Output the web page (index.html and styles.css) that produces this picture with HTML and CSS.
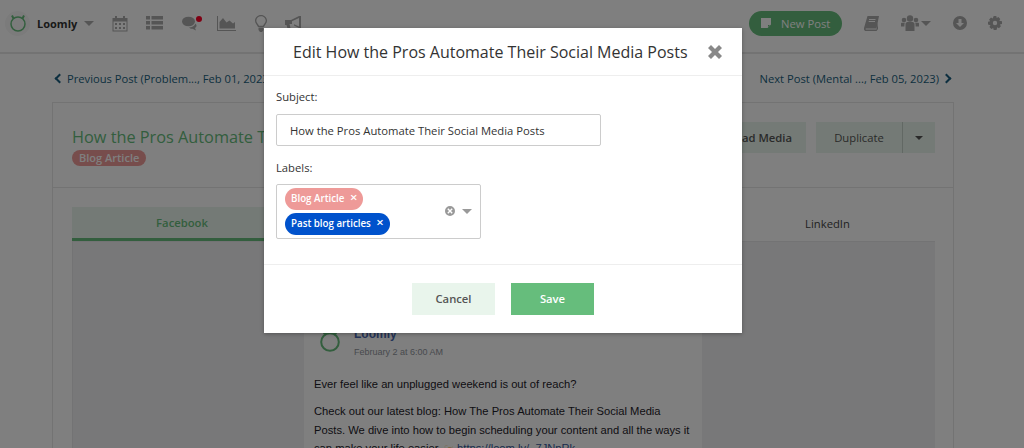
FILE: index.html
```html
<!DOCTYPE html>
<html lang="en">
<head>
    <meta charset="UTF-8">
    <title>Edit post</title>
    <link rel="stylesheet" href="styles.css">
</head>
<body>
    <div class="nav">
        <div class="nav-group">
            <div class="logo">
                <svg width="20" height="20" viewBox="0 0 20 20" fill="none">
                    <circle cx="10" cy="11" r="7" stroke="#66bd7c" stroke-width="1.500"/>
                    <path d="M4 2.500L5.500 5.500M16 2.500L14.500 5.500" stroke="#66bd7c" stroke-width="2"/>
                </svg>
            </div>
            <span class="brand">Loomly</span>
            <span class="caret caret-brand"></span>
            <svg class="icon icon-calendar" width="16" height="17" viewBox="0 0 16 17">
                <path fill-rule="evenodd" d="M.5 3H3V1H5V3H11V1H13V3H15.500V16.500H.5V3ZM1.500 6.500V15.500H14.500V6.500ZM3 8H5V10H3ZM7 8H9V10H7ZM11 8H13V10H11ZM3 12H5V14H3ZM7 12H9V14H7ZM11 12H13V14H11Z"/>
            </svg>
            <svg class="icon icon-list" width="17" height="14" viewBox="0 0 17 14">
                <path d="M0 0H4V3.500H0ZM5.500 0H17V3.500H5.500ZM0 5H4V8.500H0ZM5.500 5H17V8.500H5.500ZM0 10H4V13.500H0ZM5.500 10H17V13.500H5.500Z"/>
            </svg>
            <span class="chat">
                <svg class="icon" width="15" height="15" viewBox="0 0 15 15">
                    <ellipse cx="6.500" cy="5.500" rx="6.500" ry="4.800"/>
                    <path d="M7 11.500C10 11.500 12.500 10 13.500 7.500C15 9 15 11 13 12L14 14.500L10.500 12.800C9 13 8 12.500 7 11.500Z"/>
                </svg>
                <span class="dot"></span>
            </span>
            <svg class="icon icon-chart" width="19" height="15" viewBox="0 0 19 15">
                <path d="M0 0H1V14H19V15H0ZM2.500 12.500V6L6 2L9.500 6.500L12.500 4.500L16 7.500L18 6V12.500Z"/>
            </svg>
            <svg class="icon icon-bulb" width="12" height="17" viewBox="0 0 12 17">
                <path fill-rule="evenodd" d="M6 0C9.300 0 12 2.500 12 5.700C12 8.500 9.800 9.500 9 12H3C2.200 9.500 0 8.500 0 5.700C0 2.500 2.700 0 6 0ZM6 1.300C3.400 1.300 1.300 3.200 1.300 5.700C1.300 7.600 3.200 8.700 4 10.800H8C8.800 8.700 10.700 7.600 10.700 5.700C10.700 3.200 8.600 1.300 6 1.300ZM3.500 12.500H8.500V15L7 17H5L3.500 15Z"/>
            </svg>
            <svg class="icon icon-horn" width="16" height="15" viewBox="0 0 16 15">
                <path fill-rule="evenodd" d="M0 4H6L14 0H16V12H14L9 9.500V8.300L14 10.500V2L7 5.300V8H4.500L6 14H3L1.500 9H0Z"/>
            </svg>
        </div>
        <div class="nav-group">
            <button class="new-post">
                <svg width="10" height="10" viewBox="0 0 10 10"><path d="M0 0H10V6.500L6.500 10H0ZM7 7V9L9 7Z" fill="#fff"/></svg>
                New Post
            </button>
            <svg class="icon icon-book" width="15" height="15" viewBox="0 0 15 15">
                <path fill-rule="evenodd" d="M3.500 0H15L12.500 12.500H2C1.500 12.500 1.300 13.500 2 13.500H12.500L14 7V13L12.500 15H2C.5 15-.3 13.500 0 12ZM5 3V4H11.500V3ZM4.700 5V6H11V5Z"/>
            </svg>
            <svg class="icon icon-group" width="18" height="16" viewBox="0 0 18 16">
                <circle cx="9" cy="3.500" r="3.200"/><circle cx="3" cy="5" r="2.300"/><circle cx="15" cy="5" r="2.300"/>
                <path d="M4.500 9C4.500 7.500 6 7 7 7H11C12 7 13.500 7.500 13.500 9V16H4.500ZM0 8.500C0 8 .5 7.800 1 7.800H4C3.500 8.300 3.400 9 3.400 11.500H0ZM18 8.500C18 8 17.500 7.800 17 7.800H14C14.500 8.300 14.600 9 14.600 11.500H18Z"/>
            </svg>
            <span class="caret caret-group"></span>
            <svg class="icon icon-download" width="14" height="14" viewBox="0 0 14 14">
                <path fill-rule="evenodd" d="M7 0A7 7 0 1 1 7 14A7 7 0 1 1 7 0ZM5.500 3V7H3L7 11L11 7H8.500V3Z"/>
            </svg>
            <svg class="icon icon-gear" width="14" height="14" viewBox="0 0 14 14">
                <path fill-rule="evenodd" d="M5.700 0H8.300L8.700 2L10.400 1.100L12.300 3L11.300 4.700L14 5.300V8L11.900 8.500L12.900 10.300L11 12.200L9.300 11.200L8.500 14H5.700L5.200 11.900L3.400 12.900L1.400 11L2.500 9.300L0 8.600V5.800L2.100 5.300L1.100 3.500L3 1.600L4.700 2.600ZM7 4.800A2.200 2.200 0 1 0 7 9.200A2.200 2.200 0 1 0 7 4.800Z"/>
            </svg>
        </div>
    </div>

    <div class="pager">
        <a class="pager-link"><span class="chevron chevron-left"></span>Previous Post (Problem..., Feb 01, 2023)</a>
        <a class="pager-link">Next Post (Mental ..., Feb 05, 2023)<span class="chevron chevron-right"></span></a>
    </div>

    <div class="card">
        <div class="card-head">
            <div>
                <h2 class="post-title">How the Pros Automate Their Social Media Posts</h2>
                <span class="label-small">Blog Article</span>
            </div>
            <div class="card-actions">
                <button class="btn-soft btn-upload">Upload Media</button>
                <div class="split">
                    <button class="btn-soft btn-duplicate">Duplicate</button>
                    <button class="btn-soft btn-more"><span class="caret caret-small"></span></button>
                </div>
            </div>
        </div>
        <div class="card-body">
            <div class="tabs">
                <div class="tab tab-active">Facebook</div>
                <div class="tab-spacer"></div>
                <div class="tab">LinkedIn</div>
            </div>
            <div class="preview">
                <div class="post">
                    <div class="post-head">
                        <svg class="post-avatar" width="20" height="24" viewBox="0 0 20 24" fill="none">
                            <circle cx="10" cy="14" r="8.800" stroke="#66bd7c" stroke-width="2"/>
                            <path d="M3 2.500C3.500 5 4.500 6 6 6.500M17 2.500C16.500 5 15.500 6 14 6.500" stroke="#66bd7c" stroke-width="2"/>
                        </svg>
                        <div class="post-meta">
                            <div class="post-name">Loomly</div>
                            <div class="post-date">February 2 at 6:00 AM</div>
                        </div>
                    </div>
                    <p>Ever feel like an unplugged weekend is out of reach?</p>
                    <p>Check out our latest blog: How The Pros Automate Their Social Media Posts. We dive into how to begin scheduling your content and all the ways it can make your life easier. <span class="emoji">☞</span> <span class="post-link">https://loom.ly/_7JNpRk</span></p>
                </div>
            </div>
        </div>
    </div>

    <div class="overlay"></div>

    <div class="modal">
        <div class="modal-header">
            <h3>Edit How the Pros Automate Their Social Media Posts</h3>
            <svg class="modal-close" width="14" height="14" viewBox="0 0 14 14">
                <path d="M3 0L7 4L11 0L14 3L10 7L14 11L11 14L7 10L3 14L0 11L4 7L0 3Z"/>
            </svg>
        </div>
        <div class="modal-body">
            <label>Subject:</label>
            <input class="subject" type="text" value="How the Pros Automate Their Social Media Posts">
            <label class="label-second">Labels:</label>
            <div class="select">
                <div class="chips">
                    <span class="chip chip-pink">Blog Article <b>×</b></span>
                    <span class="chip chip-blue">Past blog articles <b>×</b></span>
                </div>
                <svg class="clear" width="10" height="10" viewBox="0 0 10 10">
                    <path fill-rule="evenodd" d="M5 0A5 5 0 1 1 5 10A5 5 0 1 1 5 0ZM3.300 2.300L2.300 3.300L4 5L2.300 6.700L3.300 7.700L5 6L6.700 7.700L7.700 6.700L6 5L7.700 3.300L6.700 2.300L5 4Z"/>
                </svg>
                <span class="caret caret-select"></span>
            </div>
        </div>
        <div class="modal-footer">
            <button class="btn-cancel">Cancel</button>
            <button class="btn-save">Save</button>
        </div>
    </div>
</body>
</html>
```

FILE: styles.css
```css
* {
    box-sizing: border-box;
}
html, body {
    height: 448px;
    overflow: hidden;
}
body {
    margin: 0;
    background-color: white;
    font-family: 'Open Sans', sans-serif;
    font-size: 13px;
    color: #333;
}
button {
    font-family: inherit;
    border: none;
}
svg {
    display: block;
    flex: none;
}
.icon {
    fill: #aaa;
}

/* top nav */
.nav {
    height: 54px;
    border-bottom: 2px solid #e6e6e6;
    display: flex;
    justify-content: space-between;
    align-items: center;
    padding: 0 22px 6px 5px;
}
.nav-group {
    display: flex;
    align-items: center;
}
.logo {
    width: 25px;
    height: 25px;
    border-radius: 50%;
    background-color: #f6f6f6;
    display: flex;
    justify-content: center;
    align-items: center;
}
.brand {
    margin-left: 7px;
    font-size: 11px;
    font-weight: 700;
    color: #333;
}
.caret {
    display: block;
    width: 0;
    height: 0;
    border-left: 5px solid transparent;
    border-right: 5px solid transparent;
    border-top: 5px solid #aaa;
}
.caret-brand {
    margin-left: 7px;
}
.icon-calendar {
    margin-left: 18px;
}
.icon-list {
    margin-left: 18px;
}
.chat {
    margin-left: 19px;
    width: 20px;
    display: flex;
    position: relative;
}
.dot {
    position: absolute;
    top: 0;
    left: 14px;
    width: 6px;
    height: 6px;
    border-radius: 50%;
    background-color: #ff0026;
}
.icon-chart {
    margin-left: 15px;
}
.icon-bulb {
    margin-left: 19px;
}
.icon-horn {
    margin-left: 18px;
}
.new-post {
    width: 93px;
    height: 25px;
    border-radius: 13px;
    background-color: #66bd7c;
    color: white;
    font-size: 11.250px;
    display: flex;
    align-items: center;
    gap: 10px;
    padding: 0 0 0 12px;
}
.icon-book {
    margin-left: 22px;
}
.icon-group {
    margin-left: 22px;
}
.caret-group {
    margin-left: 2px;
}
.icon-download {
    margin-left: 22px;
}
.icon-gear {
    margin-left: 21px;
}

/* prev / next */
.pager {
    height: 48px;
    padding: 0 74px 0 54px;
    display: flex;
    justify-content: space-between;
    align-items: center;
}
.pager-link {
    display: flex;
    align-items: center;
    gap: 4px;
    font-size: 11.200px;
    color: #1a5f80;
}
.chevron {
    display: block;
    width: 7px;
    height: 7px;
    border-top: 2.500px solid #1a5f80;
    border-left: 2.500px solid #1a5f80;
}
.chevron-left {
    transform: rotate(-45deg);
    margin-left: 2px;
}
.chevron-right {
    transform: rotate(135deg);
}

/* post card */
.card {
    width: 902px;
    margin-left: 52px;
    border: 1px solid #e6e6e6;
}
.card-head {
    height: 85px;
    padding: 19px 18px 0 19px;
    border-bottom: 1px solid #e6e6e6;
    display: flex;
    justify-content: space-between;
}
.post-title {
    margin: 0 0 -3px;
    font-size: 16.300px;
    line-height: 31px;
    font-weight: 400;
    color: #66bd7c;
}
.label-small {
    display: inline-block;
    height: 16px;
    padding: 0 7px;
    border-radius: 8px;
    background-color: #ee9a98;
    color: white;
    font-size: 11px;
    font-weight: 600;
    line-height: 16px;
    vertical-align: top;
}
.card-actions {
    display: flex;
    gap: 10px;
}
.btn-soft {
    height: 31px;
    background-color: #e9f5ec;
    color: #555;
    font-size: 11.250px;
    padding: 0 14px;
    font-weight: 400;
}
.btn-upload {
    font-weight: 600;
}
.split {
    display: flex;
}
.btn-duplicate {
    width: 86px;
    padding: 0;
}
.btn-more {
    width: 33px;
    padding: 0;
    border-left: 1px solid #c4d0c8;
    display: flex;
    justify-content: center;
    align-items: center;
}
.caret-small {
    border-left-width: 4px;
    border-right-width: 4px;
    border-top: 4px solid #555;
}
.card-body {
    padding: 19px 18px 0 19px;
}
.tabs {
    display: flex;
    height: 34px;
}
.tab {
    width: 215px;
    display: flex;
    justify-content: center;
    align-items: center;
    font-size: 11.250px;
    color: #444;
    padding-bottom: 2px;
}
.tab-active {
    width: 220px;
    background-color: #e9f5ec;
    border-bottom: 3px solid #66bd7c;
    color: #66bd7c;
    font-weight: 600;
    padding-bottom: 0;
}
.tab-spacer {
    flex: 1;
}
.preview {
    height: 220px;
    background-color: #f0f0f2;
    border-left: 1px solid #e6e6e8;
    border-top: 1px solid #e6e6e8;
    padding-top: 30px;
}
.post {
    width: 398px;
    margin-left: 231px;
    background-color: white;
    padding: 58px 12px 0 10px;
    font-family: 'Liberation Sans', sans-serif;
    font-size: 11.200px;
    line-height: 18.500px;
    color: #1d2129;
}
.post p {
    margin: 0 0 8.500px;
}
.post-head {
    display: flex;
    gap: 14px;
    margin-bottom: 16px;
}
.post-avatar {
    margin: -2px 0 0 6px;
}
.post-meta {
    margin-top: -4px;
}
.post-name {
    font-size: 12px;
    font-weight: 700;
    line-height: 16px;
    color: #4a68b0;
}
.post-date {
    margin-top: 3px;
    font-size: 9px;
    line-height: 14px;
    color: #90949c;
}
.emoji {
    color: #f0b040;
}
.post-link {
    color: #365899;
}

/* modal */
.overlay {
    position: absolute;
    inset: 0;
    background-color: rgba(0, 0, 0, 0.5);
}
.modal {
    position: absolute;
    top: 28px;
    left: 264px;
    width: 478px;
    height: 305px;
    background-color: white;
    box-shadow: 0 1px 4px rgba(0, 0, 0, 0.3);
    display: flex;
    flex-direction: column;
}
.modal-header {
    height: 48px;
    border-bottom: 1px solid #eee;
    display: flex;
    align-items: center;
    justify-content: space-between;
    padding: 0 20px 0 29px;
}
.modal-header h3 {
    margin: 0;
    font-size: 16px;
    font-weight: 400;
    color: #333;
}
.modal-close {
    fill: #888;
}
.modal-body {
    height: 189px;
    padding: 13px 12px 0;
    border-bottom: 1px solid #eee;
}
label {
    display: block;
    font-size: 11.250px;
    line-height: 16px;
    color: #333;
}
.label-second {
    margin-top: 14px;
}
.subject {
    display: block;
    margin-top: 9px;
    width: 325px;
    height: 32px;
    padding: 0 13px;
    border: 1px solid #ccc;
    border-radius: 2px;
    font-family: inherit;
    font-size: 11.250px;
    color: #333;
}
.select {
    margin-top: 8px;
    width: 205px;
    height: 55px;
    border: 1px solid #ccc;
    border-radius: 2px;
    padding: 3px 8px 0;
    display: flex;
    align-items: center;
}
.chips {
    flex: 1;
    display: flex;
    flex-direction: column;
    align-items: flex-start;
    gap: 3px;
    margin-bottom: 3px;
}
.chip {
    height: 22px;
    padding: 0 6px;
    border-radius: 11px;
    color: white;
    font-size: 9.750px;
    font-weight: 600;
    line-height: 22px;
}
.chip b {
    margin-left: 3px;
    font-size: 13px;
    font-weight: 600;
    line-height: 12px;
}
.chip-pink {
    background-color: #ee9a98;
}
.chip-blue {
    background-color: #0052cc;
}
.clear {
    fill: #999;
    margin: 0 7px 4px 0;
}
.caret-select {
    border-top-color: #999;
    margin-bottom: 4px;
}
.modal-footer {
    flex: 1;
    display: flex;
    justify-content: center;
    align-items: center;
    gap: 16px;
    padding-bottom: 1px;
}
.modal-footer button {
    width: 83px;
    height: 32px;
    font-size: 11.250px;
    font-weight: 600;
}
.btn-cancel {
    background-color: #e9f5ec;
    color: #555;
}
.btn-save {
    background-color: #66bd7c;
    color: white;
}
```
